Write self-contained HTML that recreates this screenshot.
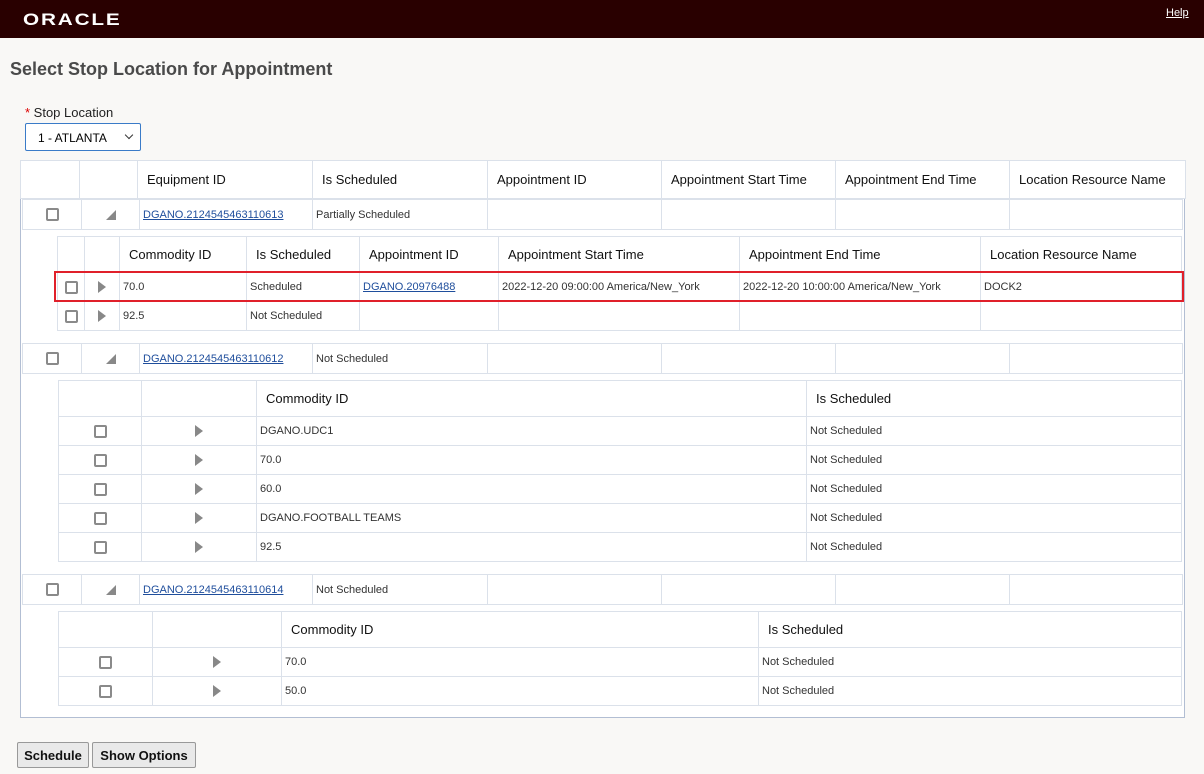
<!DOCTYPE html>
<html><head><meta charset="utf-8"><style>
*{box-sizing:border-box}
body{margin:0;width:1204px;height:774px;background:#f9f8f6;font-family:"Liberation Sans",Arial,sans-serif;position:relative;overflow:hidden;color:#000}
.top{position:absolute;left:0;top:0;width:1204px;height:38px;background:#290000}
.logo{position:absolute;left:23px;top:10px;color:#fff;font-size:17px;font-weight:bold;letter-spacing:1.5px;transform:scaleX(1.22);transform-origin:left}
.help{position:absolute;left:1166px;top:7px;color:#fff;font-size:11px;text-decoration:underline}
h1{position:absolute;left:10px;top:59px;margin:0;font-size:18px;font-weight:bold;color:#4a4a4a}
.lbl{position:absolute;left:25px;top:105px;font-size:13px;color:#222}
.lbl span{color:#d00}
.sel{position:absolute;left:25px;top:123px;width:116px;height:28px;border:1px solid #3a7bc8;background:#fff;font-size:12px;padding:7px 0 0 12px;border-radius:2px}
.sel:after{content:"";position:absolute;right:8px;top:8px;width:5px;height:5px;border-right:1.5px solid #333;border-bottom:1.5px solid #333;transform:rotate(45deg)}
.outer{position:absolute;left:20px;top:160px;width:1165px;height:558px;border:1px solid #b2bed3;background:#fff}
table{position:absolute;border-collapse:collapse;table-layout:fixed;background:#fff}
td{border:1px solid #dbe1ea;padding:0 0 0 3px;font-size:11px;color:#333;white-space:nowrap;overflow:hidden}
td.h{font-size:13px;color:#111;padding-left:9px}
a{color:#1f4e9c;text-decoration:underline}
.cb{display:inline-block;width:13px;height:13px;border:2px solid #8a8a8a;border-radius:2px;vertical-align:middle}
.c{text-align:center;padding:0}
.tri{display:inline-block;width:0;height:0;border-top:6px solid transparent;border-bottom:6px solid transparent;border-left:8px solid #888;vertical-align:middle}
.dn{display:inline-block;width:0;height:0;border-left:10px solid transparent;border-bottom:10px solid #888;vertical-align:middle}
.red{position:absolute;left:54px;top:271px;width:1130px;height:31px;border:2px solid #e0202a}
.btn{position:absolute;top:742px;height:26px;border:1px solid #999;background:#e9e9e9;font-size:13px;font-weight:bold;color:#111;padding:5px 0 0;text-align:center;border-radius:2px}
</style></head><body>
<div class="top"><div class="logo">ORACLE</div><div class="help">Help</div></div>
<h1>Select Stop Location for Appointment</h1>
<div class="lbl"><span>*</span> Stop Location</div>
<div class="sel">1 - ATLANTA</div>
<div class="outer"></div>

<table style="left:20px;top:160px;width:1165px">
<colgroup><col style="width:59px"><col style="width:58px"><col style="width:175px"><col style="width:175px"><col style="width:174px"><col style="width:174px"><col style="width:174px"><col style="width:176px"></colgroup>
<tr style="height:38px"><td></td><td></td><td class="h">Equipment ID</td><td class="h">Is Scheduled</td><td class="h">Appointment ID</td><td class="h">Appointment Start Time</td><td class="h">Appointment End Time</td><td class="h">Location Resource Name</td></tr></table>

<table style="left:22px;top:199px;width:1160px">
<colgroup><col style="width:59px"><col style="width:58px"><col style="width:173px"><col style="width:175px"><col style="width:174px"><col style="width:174px"><col style="width:174px"><col style="width:173px"></colgroup>
<tr style="height:30px"><td class="c"><span class="cb"></span></td><td class="c"><span class="dn"></span></td><td><a>DGANO.2124545463110613</a></td><td>Partially Scheduled</td><td></td><td></td><td></td><td></td></tr></table>

<table style="left:57px;top:236px;width:1124px">
<colgroup><col style="width:27px"><col style="width:35px"><col style="width:127px"><col style="width:113px"><col style="width:139px"><col style="width:241px"><col style="width:241px"><col style="width:201px"></colgroup>
<tr style="height:36px"><td></td><td></td><td class="h">Commodity ID</td><td class="h">Is Scheduled</td><td class="h">Appointment ID</td><td class="h">Appointment Start Time</td><td class="h">Appointment End Time</td><td class="h">Location Resource Name</td></tr>
<tr style="height:29px"><td class="c"><span class="cb"></span></td><td class="c"><span class="tri"></span></td><td>70.0</td><td>Scheduled</td><td><a>DGANO.20976488</a></td><td>2022-12-20 09:00:00 America/New_York</td><td>2022-12-20 10:00:00 America/New_York</td><td>DOCK2</td></tr>
<tr style="height:29px"><td class="c"><span class="cb"></span></td><td class="c"><span class="tri"></span></td><td>92.5</td><td>Not Scheduled</td><td></td><td></td><td></td><td></td></tr></table>
<div class="red"></div>

<table style="left:22px;top:343px;width:1160px">
<colgroup><col style="width:59px"><col style="width:58px"><col style="width:173px"><col style="width:175px"><col style="width:174px"><col style="width:174px"><col style="width:174px"><col style="width:173px"></colgroup>
<tr style="height:30px"><td class="c"><span class="cb"></span></td><td class="c"><span class="dn"></span></td><td><a>DGANO.2124545463110612</a></td><td>Not Scheduled</td><td></td><td></td><td></td><td></td></tr></table>

<table style="left:58px;top:380px;width:1123px">
<colgroup><col style="width:83px"><col style="width:115px"><col style="width:550px"><col style="width:375px"></colgroup>
<tr style="height:36px"><td></td><td></td><td class="h">Commodity ID</td><td class="h">Is Scheduled</td></tr>
<tr style="height:29px"><td class="c"><span class="cb"></span></td><td class="c"><span class="tri"></span></td><td>DGANO.UDC1</td><td>Not Scheduled</td></tr>
<tr style="height:29px"><td class="c"><span class="cb"></span></td><td class="c"><span class="tri"></span></td><td>70.0</td><td>Not Scheduled</td></tr>
<tr style="height:29px"><td class="c"><span class="cb"></span></td><td class="c"><span class="tri"></span></td><td>60.0</td><td>Not Scheduled</td></tr>
<tr style="height:29px"><td class="c"><span class="cb"></span></td><td class="c"><span class="tri"></span></td><td>DGANO.FOOTBALL TEAMS</td><td>Not Scheduled</td></tr>
<tr style="height:29px"><td class="c"><span class="cb"></span></td><td class="c"><span class="tri"></span></td><td>92.5</td><td>Not Scheduled</td></tr></table>

<table style="left:22px;top:574px;width:1160px">
<colgroup><col style="width:59px"><col style="width:58px"><col style="width:173px"><col style="width:175px"><col style="width:174px"><col style="width:174px"><col style="width:174px"><col style="width:173px"></colgroup>
<tr style="height:30px"><td class="c"><span class="cb"></span></td><td class="c"><span class="dn"></span></td><td><a>DGANO.2124545463110614</a></td><td>Not Scheduled</td><td></td><td></td><td></td><td></td></tr></table>

<table style="left:58px;top:611px;width:1123px">
<colgroup><col style="width:94px"><col style="width:129px"><col style="width:477px"><col style="width:423px"></colgroup>
<tr style="height:36px"><td></td><td></td><td class="h">Commodity ID</td><td class="h">Is Scheduled</td></tr>
<tr style="height:29px"><td class="c"><span class="cb"></span></td><td class="c"><span class="tri"></span></td><td>70.0</td><td>Not Scheduled</td></tr>
<tr style="height:29px"><td class="c"><span class="cb"></span></td><td class="c"><span class="tri"></span></td><td>50.0</td><td>Not Scheduled</td></tr></table>

<div class="btn" style="left:17px;width:72px">Schedule</div>
<div class="btn" style="left:92px;width:104px">Show Options</div>
</body></html>
